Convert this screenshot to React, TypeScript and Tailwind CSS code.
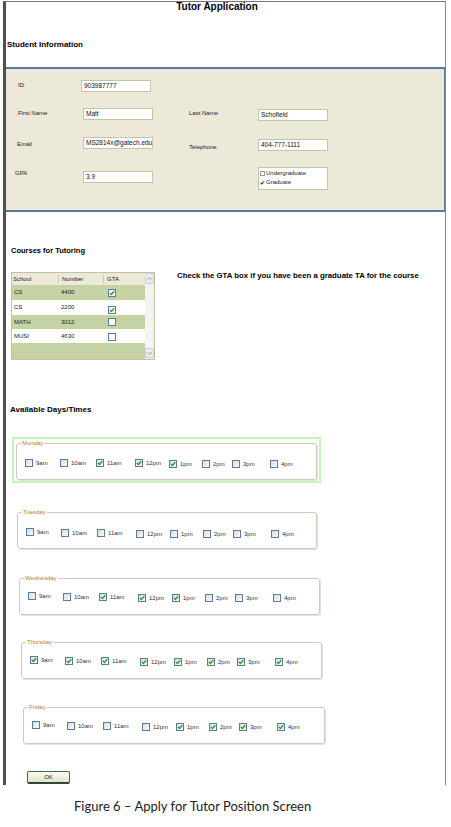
import React from "react";

const Check = ({ checked, className = "" }: { checked?: boolean; className?: string }) => (
  <span
    className={`inline-flex shrink-0 w-[8px] h-[8px] items-center justify-center border border-[#5a7ba6] bg-linear-to-br from-[#dcdcd4] to-[#fbfbf9] ${className}`}
  >
    {checked && (
      <svg width="6" height="6" viewBox="0 0 6 6">
        <path d="M0.8 2.9 L2.4 4.5 L5.3 1.2" fill="none" stroke="#21a121" strokeWidth="1.3" />
      </svg>
    )}
  </span>
);

const Field = ({ value, className = "" }: { value: string; className?: string }) => (
  <div
    className={`w-[70px] h-[12px] shrink-0 border border-[#c3c6a6] bg-white px-[2px] text-[6.5px] leading-[10px] text-[#111] overflow-hidden whitespace-nowrap ${className}`}
  >
    {value}
  </div>
);

const Label = ({ children, className = "" }: { children: React.ReactNode; className?: string }) => (
  <div className={`shrink-0 text-[6px] leading-[8px] text-[#222] ${className}`}>{children}</div>
);

const slots = ["9am", "10am", "11am", "12pm", "1pm", "2pm", "3pm", "4pm"];
const mtFlat = ["mt-0", "mt-0", "mt-0", "mt-0", "mt-[1px]", "mt-[1px]", "mt-[1px]", "mt-[1px]"];
const mtSlope = ["mt-0", "mt-[1px]", "mt-[1px]", "mt-[2px]", "mt-[2px]", "mt-[2px]", "mt-[2px]", "mt-[2px]"];

const DayRow = ({ checked, mts }: { checked: number[]; mts: string[] }) => (
  <div className="grid grid-cols-[35px_36px_39px_34px_33px_30px_38px_30px] pl-[8px] items-start">
    {slots.map((s, i) => (
      <div key={s} className={`flex items-center gap-[3px] text-[6px] leading-[8px] text-[#333] ${mts[i]}`}>
        <Check checked={checked.includes(i)} />
        <span>{s}</span>
      </div>
    ))}
  </div>
);

const Legend = ({ children }: { children: React.ReactNode }) => (
  <legend className="ml-[4px] px-[1px] text-[6px] leading-[6px] text-[#c0782f]">{children}</legend>
);

const boxCls = "h-[40px] border border-[#cdcbbd] rounded-[3px] shadow-[1px_1px_0_#e4e2d8] bg-white";

const rows = [
  { school: "CS", num: "4400", gta: true, bg: "bg-[#c5d2a3]", h: "h-[15px]", cb: "" },
  { school: "CS", num: "2200", gta: true, bg: "bg-white", h: "h-[15px]", cb: "mt-[4px]" },
  { school: "MATH", num: "3012", gta: false, bg: "bg-[#c5d2a3]", h: "h-[14px]", cb: "" },
  { school: "MUSI", num: "4630", gta: false, bg: "bg-white", h: "h-[14px]", cb: "mt-[2px]" },
];

export default function App() {
  return (
    <div className="w-[451px] h-[827px] bg-white overflow-hidden font-['Liberation_Sans',Arial,sans-serif] text-black">
      <div className="mt-[1px] ml-[3px] w-[443px] h-[784px] overflow-hidden border-t border-t-[#777] border-r border-r-[#8a8a8a] border-l-[3px] border-l-[#505050]">
        {/* Title */}
        <div className="h-[12px] pr-[17px] text-center text-[10px] leading-[10px] font-bold">Tutor Application</div>

        <div className="mt-[27px] pl-[1px] text-[8px] leading-[8px] font-bold">Student Information</div>

        {/* Student info panel */}
        <div className="mt-[18px] h-[145px] bg-[#ece9d8] border-t-2 border-b-2 border-r border-[#5878a0]">
          <div className="mt-[11px] flex items-start pl-[12px]">
            <Label className="w-[63px] mt-[1px]">ID</Label>
            <Field value="903987777" />
          </div>
          <div className="mt-[16px] flex items-start pl-[12px]">
            <Label className="w-[65px] mt-[1px]">First Name</Label>
            <Field value="Matt" />
            <Label className="ml-[36px] w-[69px] mt-[1px]">Last Name</Label>
            <Field value="Schofield" className="mt-[1px]" />
          </div>
          <div className="mt-[16px] flex items-start pl-[11px]">
            <Label className="w-[66px] mt-[3px]">Email</Label>
            <Field value="MS2814x@gatech.edu" />
            <Label className="ml-[36px] w-[69px] mt-[6px]">Telephone</Label>
            <Field value="404-777-1111" className="mt-[2px]" />
          </div>
          <div className="mt-[16px] flex items-start pl-[9px]">
            <Label className="w-[68px] mt-[2px]">GPA</Label>
            <Field value="3.9" className="mt-[4px]" />
            <div className="ml-[105px] w-[70px] h-[23px] border border-[#c3c6a6] bg-white pt-[1px] pl-[1px] text-[6px] leading-[9px] text-[#222]">
              <div className="flex items-center gap-[1px]">
                <span className="inline-block w-[5px] h-[5px] border border-[#9a9a9a] bg-white" />
                <span>Undergraduate</span>
              </div>
              <div className="flex items-center gap-[1px]">
                <span className="inline-block w-[5px] text-[6px] leading-[6px] text-black">✔</span>
                <span>Graduate</span>
              </div>
            </div>
          </div>
        </div>

        {/* Courses */}
        <div className="mt-[35px] pl-[5px] text-[7.5px] leading-[8px] font-bold">Courses for Tutoring</div>
        <div className="mt-[17px] flex items-start pl-[5px]">
          <div className="w-[144px] h-[88px] shrink-0 border border-[#bcc3a6] flex">
            <div className="flex-1 flex flex-col text-[6px] text-[#222]">
              <div className="h-[12px] bg-[#ece9d8] flex items-center">
                <div className="w-[46px] pl-[1px]">School</div>
                <div className="w-[45px] pl-[3px] border-l border-[#c9c6b6] h-[8px] leading-[8px]">Number</div>
                <div className="w-[42px] pl-[3px] border-l border-[#c9c6b6] h-[8px] leading-[8px]">GTA</div>
              </div>
              {rows.map((r, i) => (
                <div key={i} className={`flex items-center ${r.h} ${r.bg}`}>
                  <div className="w-[46px] pl-[2px]">{r.school}</div>
                  <div className="w-[45px] pl-[3px]">{r.num}</div>
                  <div className="w-[42px] pl-[5px] flex">
                    <Check checked={r.gta} className={`bg-none bg-white border-[#4f79aa] ${r.cb}`} />
                  </div>
                </div>
              ))}
              <div className="flex-1 bg-[#c5d2a3]" />
            </div>
            <div className="w-[9px] flex flex-col bg-[#f3f4ef]">
              <div className="h-[11px] border border-[#cbd1dc] bg-[#e8ecf2] rounded-[1px] flex items-center justify-center">
                <svg width="5" height="3" viewBox="0 0 5 3">
                  <path d="M0.5 2.6 L2.5 0.6 L4.5 2.6" fill="none" stroke="#8a93a3" strokeWidth="0.9" />
                </svg>
              </div>
              <div className="flex-1" />
              <div className="h-[10px] mb-[1px] border border-[#cbd1dc] bg-[#e8ecf2] rounded-[1px] flex items-center justify-center">
                <svg width="5" height="3" viewBox="0 0 5 3">
                  <path d="M0.5 0.4 L2.5 2.4 L4.5 0.4" fill="none" stroke="#8a93a3" strokeWidth="0.9" />
                </svg>
              </div>
            </div>
          </div>
          <div className="ml-[22px] text-[7.8px] leading-[8px] font-bold whitespace-nowrap">
            Check the GTA box if you have been a graduate TA for the course
          </div>
        </div>

        {/* Days */}
        <div className="mt-[46px] pl-[4px] text-[8px] leading-[8px] font-bold">Available Days/Times</div>

        <div className="ml-[6px] mt-[23px] w-[309px] border-2 border-[#c2f6bb] pt-[1px] px-[2px] pb-[1px]">
          <fieldset className={`w-[301px] ${boxCls}`}>
            <Legend>Monday</Legend>
            <div className="pt-[13px]">
              <DayRow checked={[2, 3, 4]} mts={mtFlat} />
            </div>
          </fieldset>
        </div>

        <fieldset className={`ml-[11px] mt-[26px] w-[300px] ${boxCls}`}>
          <Legend>Tuesday</Legend>
          <div className="pt-[13px]">
            <DayRow checked={[]} mts={mtSlope} />
          </div>
        </fieldset>

        <fieldset className={`ml-[13px] mt-[26px] w-[301px] ${boxCls}`}>
          <Legend>Wednesday</Legend>
          <div className="pt-[11px]">
            <DayRow checked={[2, 3, 4]} mts={mtSlope} />
          </div>
        </fieldset>

        <fieldset className={`ml-[15px] mt-[24px] w-[301px] ${boxCls}`}>
          <Legend>Thursday</Legend>
          <div className="pt-[11px]">
            <DayRow checked={[0, 1, 2, 3, 4, 5, 6, 7]} mts={mtSlope} />
          </div>
        </fieldset>

        <fieldset className={`ml-[17px] mt-[25px] w-[302px] ${boxCls}`}>
          <Legend>Friday</Legend>
          <div className="pt-[11px]">
            <DayRow checked={[4, 5, 6, 7]} mts={mtSlope} />
          </div>
        </fieldset>

        <div className="mt-[27px] ml-[21px] w-[43px] h-[13px] rounded-[2px] border border-[#3d6b45] border-b-2 border-b-[#284a2e] bg-linear-to-b from-[#fbfbf3] to-[#e3e3cf] flex items-center justify-center text-[6px] leading-[6px] text-[#222]">
          OK
        </div>
      </div>

      <div className="mt-[15px] ml-[74px] font-['Lato',sans-serif] text-[13px] leading-[13px] text-[#222] whitespace-nowrap">
        Figure 6 – Apply for Tutor Position Screen
      </div>
    </div>
  );
}
